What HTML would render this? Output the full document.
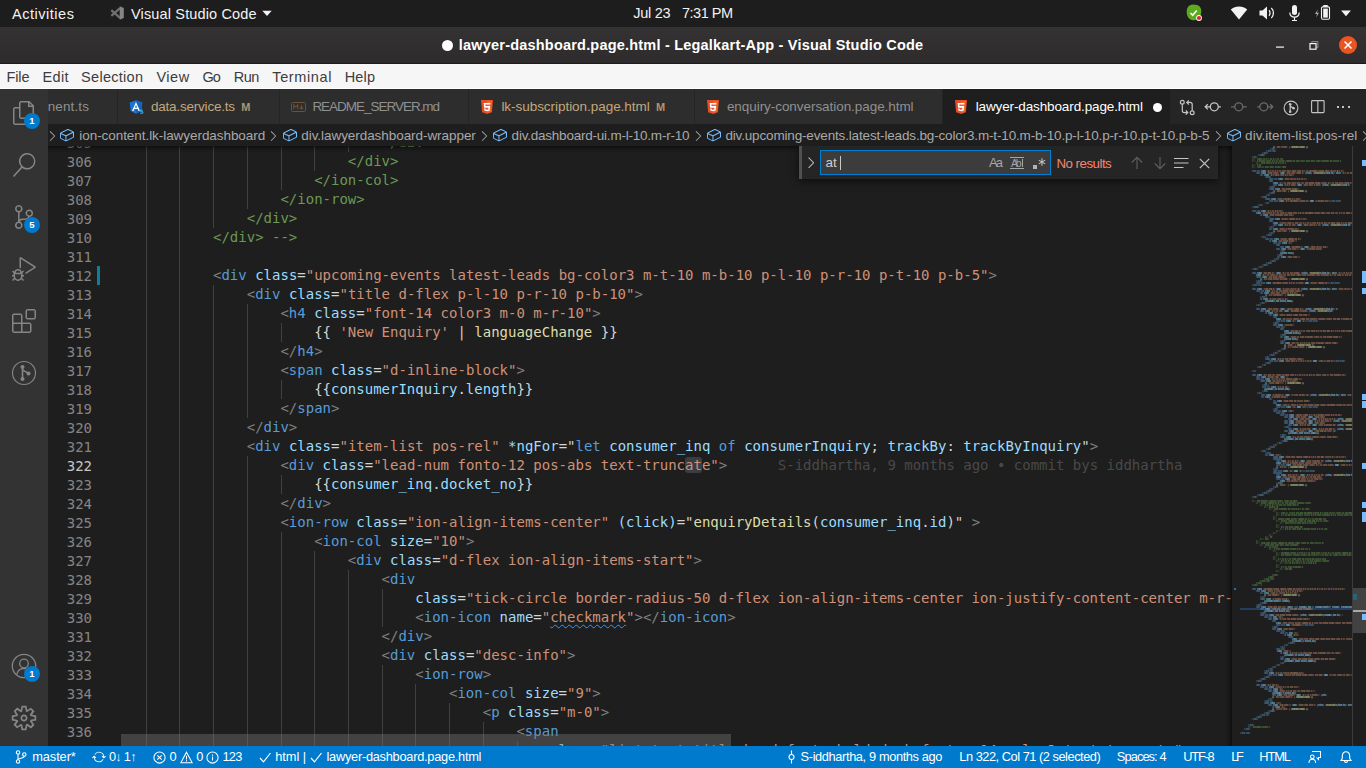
<!DOCTYPE html>
<html lang="en">
<head>
<meta charset="utf-8">
<title>lawyer-dashboard.page.html - Legalkart-App - Visual Studio Code</title>
<style>
*{box-sizing:border-box;margin:0;padding:0}
html,body{width:1366px;height:768px;overflow:hidden;background:#1e1e1e}
body{position:relative;font-family:"Liberation Sans","DejaVu Sans",sans-serif;color:#ccc;font-size:13px}
.abs{position:absolute}
.tx{position:absolute;white-space:pre}
.badge{position:absolute;width:16px;height:16px;border-radius:8px;background:#007acc;color:#fff;font-size:9.5px;font-weight:bold;line-height:16px;text-align:center}
#topbar{left:0;top:0;width:1366px;height:27px;background:#1d1d1d;color:#f2f2f2;font-size:14.5px}

#titlebar{left:0;top:27px;width:1366px;height:37px;background:linear-gradient(#343233,#2d2b2c);border-bottom:1px solid #1c1b1b;color:#fff}
#titlebar .tt{position:absolute;left:0;width:1366px;top:0;line-height:36px;text-align:center;font-weight:bold;font-size:14.5px;white-space:nowrap}
#menubar{left:0;top:64px;width:1366px;height:25px;background:#f6f6f6;border-bottom:1px solid #fff;color:#3d3d3d;font-size:14.5px}

#activity{left:0;top:89px;width:48px;height:657px;background:#333333}
#tabs{left:48px;top:89px;width:1318px;height:35px;background:#252526;overflow:hidden}
.tab{position:absolute;top:0;height:35px;background:#2d2d2d;border-right:1px solid #252526;font-size:13.5px;line-height:35px;white-space:nowrap;color:#8f8f8f}
.tab.active{background:#1e1e1e;color:#fff}
.tab.mod{color:#a8946f}

#crumbs{left:48px;top:124px;width:1318px;height:22px;background:#1e1e1e;color:#a9a9a9;font-size:13.5px;line-height:22px;overflow:hidden;white-space:nowrap}

#editor{left:48px;top:146px;width:1318px;height:600px;background:#1e1e1e;overflow:hidden}
#code{position:absolute;left:0;top:0;width:1183px;height:600px;overflow:hidden}
#gutter{position:absolute;left:0;top:0;width:64px;height:600px;background:#1e1e1e;overflow:hidden}
#topshadow{position:absolute;left:0;top:0;width:1304px;height:6px;box-shadow:#000 0 6px 6px -6px inset}
#status{left:0;top:746px;width:1366px;height:22px;background:#007acc;color:#fff;font-size:12.5px;line-height:22px;white-space:nowrap}

.mono{font-family:"DejaVu Sans Mono","Liberation Mono",monospace;font-size:14px}
.ln{position:absolute;left:0;width:44px;text-align:right;color:#858585;line-height:19px;height:19px}
.ln.cur{color:#c6c6c6}
.cl{position:absolute;white-space:pre;line-height:19px;height:19px;color:#d4d4d4}
.g{color:#808080}.t{color:#569cd6}.a{color:#9cdcfe}.s{color:#ce9178}.c{color:#6a9955}.f{color:#dcdcaa}.k{color:#569cd6}
.sel{background:#3a3d41;border-radius:3px}
.blame{color:#494949;margin-left:50.6px}
.sq{text-decoration:underline wavy #3794ff 1px;text-underline-offset:2px}
.guide{position:absolute;width:1px;background:#404040}
.gitmod{position:absolute;left:49px;top:120px;width:3px;height:19px;background:#0c7d9d}
#find{font-family:"Liberation Sans","DejaVu Sans",sans-serif;background:#252526;box-shadow:0 2px 8px rgba(0,0,0,.6)}
#mmshadow{position:absolute;left:1178px;top:0;width:6px;height:600px;box-shadow:#000 -6px 0 6px -6px inset}
#mm{position:absolute;left:1184px;top:0;width:120px;height:600px;overflow:hidden;background:#1e1e1e}
#mmtext{position:absolute;left:4.3px;top:-1px;transform-origin:0 0;transform:scale(0.083051,0.1);white-space:pre;font-size:20px;line-height:20px;text-shadow:0 9px 0;opacity:.92;font-weight:bold;color:#d4d4d4}
#mmtext .p{color:#d4d4d4}
.mmsel{position:absolute;left:8px;top:462px;width:112px;height:2px;background:#223f60}
.mmgit{position:absolute;left:2px;top:442px;width:2px;height:2px;background:#0c7d9d}
#vscroll{position:absolute;left:1304px;top:0;width:14px;height:600px;border-left:1px solid #3b3b3b}
.vs-slider{position:absolute;left:0;top:442px;width:13px;height:45px;background:rgba(121,121,121,.4)}
.vs-git{position:absolute;left:0;top:448px;width:4px;height:6px;background:rgba(12,125,157,.6)}
.vs-cursor{position:absolute;left:0;top:464px;width:13px;height:2px;background:#a9a9a9}
.vs-info{position:absolute;left:9px;width:4px;background:#75beff}
#hscroll{position:absolute;left:73px;top:588px;width:610px;height:12px;background:rgba(121,121,121,0.4)}
</style>
</head>
<body>
<div id="topbar" class="abs">
<span class="tx" style="left:12.10px;top:1px;font-size:14.5px;letter-spacing:0.514px;line-height:27px;">Activities</span>
<svg class="abs" style="left:109px;top:5px" width="16" height="16" viewBox="0 0 16 16" ><path d="M11 3.200L2.300 10.800M11 12.800L2.300 5.200" stroke="#6f6f6f" stroke-width="2.300" fill="none"/><path fill="#858585" d="M10.700 1.200L14.800 3v10l-4.100 1.800z"/></svg>
<span class="tx" style="left:131.00px;top:1px;font-size:14.5px;letter-spacing:0.15px;line-height:27px;">Visual Studio Code</span>
<svg class="abs" style="left:262px;top:10px" width="10" height="7" viewBox="0 0 10 7" ><path fill="#f2f2f2" d="M.300 .800h9.400L5 6z"/></svg>
<span class="tx" style="left:633.20px;top:0px;font-size:14.5px;letter-spacing:-0.255px;line-height:27px;">Jul 23</span>
<span class="tx" style="left:681.90px;top:0px;font-size:14.5px;letter-spacing:-0.462px;line-height:27px;">7:31 PM</span>
<svg class="abs" style="left:1185px;top:4px" width="18" height="18" viewBox="0 0 18 18" ><path fill="#5cab1d" d="M5 1.200C7 .300 9.500 .300 12 1c2.800.800 4.300 3 4.300 6 0 3.500-1.200 6.500-3.800 8.300-2.300 1.600-5.800 1.200-7.800-.300C2.500 13.300 1.600 10.500 1.700 7.500 1.800 4.500 2.800 2.200 5 1.200z"/><path d="M5.500 9l2.200 2.200 4-4.700" fill="none" stroke="#fff" stroke-width="1.600"/><circle cx="14" cy="14" r="2.900" fill="#fff"/><circle cx="14" cy="14" r="2.100" fill="#e5202e"/></svg>
<svg class="abs" style="left:1230px;top:6px" width="18" height="14" viewBox="0 0 18 14" ><path fill="#f2f2f2" d="M9 13.500L.800 3.600C3 1.600 5.900 .500 9 .500s6 1.100 8.200 3.100z"/><path fill="none" stroke="#1d1d1d" stroke-width="1.100" d="M2.500 5.500C4.300 4 6.600 3.200 9 3.200s4.700.800 6.500 2.300" opacity="0"/></svg>
<svg class="abs" style="left:1259px;top:6px" width="17" height="14" viewBox="0 0 17 14" ><path fill="#f2f2f2" d="M.500 4.500h3L8 .500v13L3.500 9.500h-3z"/><path fill="none" stroke="#f2f2f2" stroke-width="1.300" d="M10 4.300c1.400 1.300 1.400 4.100 0 5.400M12.300 2c2.800 2.600 2.800 7.400 0 10"/></svg>
<svg class="abs" style="left:1288px;top:4px" width="13" height="18" viewBox="0 0 13 18" ><rect x="4" y="1" width="5" height="10" rx="2.500" fill="#f2f2f2"/><path fill="none" stroke="#f2f2f2" stroke-width="1.200" d="M1.800 8.500c0 3 2 4.700 4.700 4.700s4.700-1.700 4.700-4.700M6.500 13.200v3M4 16.500h5"/></svg>
<svg class="abs" style="left:1314px;top:4px" width="18" height="17" viewBox="0 0 18 17" ><path fill="#a9a9a9" d="M3.800 5.500L1 10h2l-.800 3.500L5 8.800H3z"/><rect x="9.300" y="1" width="4.400" height="2" fill="#f2f2f2"/><rect x="7.500" y="2.900" width="8" height="12.400" rx="1.200" fill="none" stroke="#f2f2f2" stroke-width="1.100"/><rect x="9.200" y="4.600" width="4.600" height="9" fill="#f2f2f2"/></svg>
<svg class="abs" style="left:1341px;top:10px" width="10" height="7" viewBox="0 0 10 7" ><path fill="#f2f2f2" d="M.100 .600h9.800L5 6.200z"/></svg>
</div>
<div id="titlebar" class="abs">
<div class="abs" style="left:441.700px;top:13px;width:11px;height:11px;border-radius:50%;background:#fff"></div>
<span class="tx" style="left:458.80px;top:0px;font-size:14.5px;letter-spacing:0.203px;font-weight:700;color:#fff;line-height:36px;">lawyer-dashboard.page.html - Legalkart-App - Visual Studio Code</span>
<svg class="abs" style="left:1275px;top:17px" width="10" height="5" viewBox="0 0 10 5" ><rect x="1" y="2.500" width="8" height="1.200" fill="#f5f5f5"/></svg>
<svg class="abs" style="left:1309px;top:14px" width="10" height="9" viewBox="0 0 10 9" ><path d="M2.800 2.300V.600h6.100v6.100H7.300" fill="none" stroke="#8e8e8e" stroke-width="1"/><rect x="1" y="2.600" width="6" height="5.600" fill="none" stroke="#f5f5f5" stroke-width="1.200"/></svg>
<div class="abs" style="left:1339px;top:9px;width:18px;height:18px;border-radius:50%;background:#e95420"></div>
<svg class="abs" style="left:1343px;top:13px" width="10" height="10" viewBox="0 0 10 10" ><path d="M1.500 1.500l7 7M8.500 1.500l-7 7" stroke="#fff" stroke-width="1.600"/></svg>
</div>
<div id="menubar" class="abs">
<span class="tx" style="left:6.40px;top:1px;font-size:14.5px;letter-spacing:-0.05px;line-height:25px;">File</span>
<span class="tx" style="left:42.50px;top:1px;font-size:14.5px;letter-spacing:0.371px;line-height:25px;">Edit</span>
<span class="tx" style="left:81.10px;top:1px;font-size:14.5px;letter-spacing:0.287px;line-height:25px;">Selection</span>
<span class="tx" style="left:156.40px;top:1px;font-size:14.5px;letter-spacing:0.551px;line-height:25px;">View</span>
<span class="tx" style="left:202.60px;top:1px;font-size:14.5px;letter-spacing:-1.163px;line-height:25px;">Go</span>
<span class="tx" style="left:233.70px;top:1px;font-size:14.5px;letter-spacing:-0.444px;line-height:25px;">Run</span>
<span class="tx" style="left:272.30px;top:1px;font-size:14.5px;letter-spacing:0.627px;line-height:25px;">Terminal</span>
<span class="tx" style="left:344.70px;top:1px;font-size:14.5px;letter-spacing:0.163px;line-height:25px;">Help</span>
</div><div id="activity" class="abs">
<svg class="abs" style="left:12px;top:12px" width="24" height="24" viewBox="0 0 24 24" ><path fill="#858585" d="M17.5 0h-9L7 1.5V6H2.5L1 7.5v15.07L2.5 24h12.07L16 22.57V18h4.7l1.3-1.43V4.5L17.5 0zm0 2.12l2.38 2.38H17.5V2.12zm-3 20.38h-12v-15H7v9.07L8.5 18h6v4.5zm6-6h-12v-15H16V6h4.5v10.5z"/></svg>
<div class="badge" style="left:24px;top:24px">1</div>
<svg class="abs" style="left:12px;top:64px" width="24" height="24" viewBox="0 0 24 24" ><path fill="#858585" d="M15.25 0a8.25 8.25 0 0 0-6.18 13.72L1 22.88l1.12 1.12 8.05-9.12A8.251 8.251 0 1 0 15.25.01V0zm0 15a6.75 6.75 0 1 1 0-13.5 6.75 6.75 0 0 1 0 13.5z"/></svg>
<svg class="abs" style="left:12px;top:116px" width="24" height="24" viewBox="0 0 24 24" ><path fill="#858585" d="M21.007 8.222A3.738 3.738 0 0 0 15.045 5.2a3.737 3.737 0 0 0 1.156 6.583 2.988 2.988 0 0 1-2.668 1.67h-2.99a4.456 4.456 0 0 0-2.989 1.165V7.4a3.737 3.737 0 1 0-1.494 0v9.117a3.776 3.776 0 1 0 1.816.099 2.99 2.99 0 0 1 2.668-1.667h2.99a4.484 4.484 0 0 0 4.223-3.039 3.736 3.736 0 0 0 3.25-3.687zM4.565 3.738a2.242 2.242 0 1 1 4.484 0 2.242 2.242 0 0 1-4.484 0zm4.484 16.441a2.242 2.242 0 1 1-4.484 0 2.242 2.242 0 0 1 4.484 0zm8.221-9.715a2.242 2.242 0 1 1 0-4.485 2.242 2.242 0 0 1 0 4.485z"/></svg>
<div class="badge" style="left:24px;top:128px">5</div>
<svg class="abs" style="left:12px;top:168px" width="24" height="24" viewBox="0 0 24 24" ><path fill="#858585" d="M10.94 13.5l-1.32 1.32a3.73 3.73 0 0 0-7.24 0L1.06 13.5 0 14.56l1.72 1.72-.22.22V18H0v1.5h1.5v.08c.077.489.214.966.41 1.42L0 22.94 1.06 24l1.65-1.65A4.308 4.308 0 0 0 6 24a4.31 4.31 0 0 0 3.29-1.65L10.94 24 12 22.94 10.09 21c.198-.464.336-.951.41-1.45v-.1H12V18h-1.5v-1.500l-.22-.22L12 14.560l-1.060-1.060zM6 13.500a2.250 2.250 0 0 1 2.250 2.250h-4.500A2.250 2.250 0 0 1 6 13.500zm3 6a3.330 3.330 0 0 1-3 3 3.330 3.330 0 0 1-3-3v-2.250h6v2.250zm14.760-9.900v1.260L13.500 17.370V15.600l8.500-5.370L9 2v9.460a5.070 5.070 0 0 0-1.500-.72V.630L8.640 0l15.120 9.600z"/></svg>
<svg class="abs" style="left:12px;top:220px" width="24" height="24" viewBox="0 0 24 24" ><path fill="#858585" d="M13.5 1.5L15 0h7.5L24 1.5V9l-1.5 1.5H15L13.500 9V1.500zm1.500 0V9h7.500V1.500H15zM0 15V6l1.500-1.500H9L10.500 6v7.500H18l1.500 1.500v7.500L18 24H1.500L0 22.500V15zm9-1.500V6H1.500v7.500H9zM9 15H1.500v7.500H9V15zm1.500 7.500H18V15h-7.500v7.500z"/></svg>
<svg class="abs" style="left:11px;top:271px" width="26" height="26" viewBox="0 0 26 26" ><circle cx="13" cy="13" r="11.5" fill="none" stroke="#858585" stroke-width="1.2"/><path d="M11.5 18.5V7.500M11.5 9c0 3 5.500 2 5.500 5" fill="none" stroke="#858585" stroke-width="1.600"/><circle cx="11.500" cy="7" r="2" fill="#858585"/><circle cx="11.500" cy="19" r="2" fill="#858585"/><circle cx="17.500" cy="13.500" r="2" fill="#858585"/></svg>
<svg class="abs" style="left:11px;top:564px" width="26" height="26" viewBox="0 0 26 26" ><circle cx="13" cy="13" r="11.700" fill="none" stroke="#858585" stroke-width="1.300"/><circle cx="13" cy="10.500" r="4.300" fill="none" stroke="#858585" stroke-width="1.300"/><path d="M5.800 21.500c.8-4 3.600-6 7.200-6s6.400 2 7.200 6" fill="none" stroke="#858585" stroke-width="1.300"/></svg>
<div class="badge" style="left:24px;top:577px">1</div>
<svg class="abs" style="left:10px;top:615px" width="28" height="28" viewBox="0 0 16 16" ><path fill="#858585" d="M9.1 4.4L8.6 2H7.4l-.5 2.4-.7.3-2-1.3-.9.8 1.3 2-.2.7-2.4.5v1.200l2.400.500.300.800-1.300 2 .800.800 2-1.300.800.300.400 2.300h1.200l.500-2.400.800-.300 2 1.300.800-.800-1.300-2 .300-.800 2.300-.400V7.400l-2.400-.500-.300-.800 1.300-2-.800-.800-2 1.300-.700-.200zM9.400 1l.500 2.400L12 2.100l2 2-1.400 2.100 2.400.400v2.800l-2.400.500L14 12l-2 2-2.100-1.400-.500 2.400H6.600l-.500-2.400L4 13.900l-2-2 1.400-2.100L1 9.400V6.600l2.400-.500L2.100 4l2-2 2.100 1.400.400-2.400h2.800zm.600 7c0 1.100-.900 2-2 2s-2-.900-2-2 .900-2 2-2 2 .900 2 2zM8 9c.600 0 1-.400 1-1s-.400-1-1-1-1 .400-1 1 .400 1 1 1z"/></svg>
</div><div id="tabs" class="abs">
<div class="tab " style="left:0px;width:70px"></div>
<div class="tab " style="left:70px;width:162px"></div>
<div class="tab " style="left:232px;width:189px"></div>
<div class="tab " style="left:421px;width:226px"></div>
<div class="tab " style="left:647px;width:248px"></div>
<div class="tab active" style="left:895px;width:228px"></div>
<span class="tx" style="left:-0.30px;top:0px;font-size:13.5px;letter-spacing:0.118px;color:#909090;line-height:35px;">nent.ts</span>
<svg class="abs" style="left:81px;top:11px" width="15" height="15" viewBox="0 0 15 15" ><path fill="#1976d2" d="M7 .300L13.300 2.600l-1 8.300L7 13.800 1.700 10.900.700 2.600z"/><path fill="#1565c0" d="M7 .300L13.300 2.600l-1 8.300L7 13.800z"/><path fill="#fff" d="M7 2L3 11h1.500l.800-2h3.400l.800 2H11zM7 4.800L8.100 7.700H5.900z"/><path fill="none" stroke="#29b6f6" stroke-width="1.100" d="M13.800 10.300c-.500-.500-2.300-.600-2.300.400 0 1.100 2.400.600 2.400 1.800 0 1-1.900 1-2.600.300"/></svg>
<span class="tx" style="left:102.90px;top:0px;font-size:13.5px;letter-spacing:-0.203px;color:#c3a77c;line-height:35px;">data.service.ts</span>
<span class="tx" style="left:193.20px;top:0.5px;font-size:11px;letter-spacing:0.428px;font-weight:700;color:#c3a77c;line-height:35px;opacity:.85;">M</span>
<svg class="abs" style="left:243px;top:13px" width="15" height="10" viewBox="0 0 15 10" ><rect x=".500" y=".500" width="14" height="9" rx="1" fill="none" stroke="#6b5236" stroke-width="1"/><path d="M2.800 7.300V2.800L4.800 5l2-2.200v4.500M10.500 2.800v4.200M8.800 5.500l1.700 1.800 1.700-1.800" fill="none" stroke="#6b5236" stroke-width="1.100"/></svg>
<span class="tx" style="left:264.40px;top:0px;font-size:13.5px;letter-spacing:-1.022px;color:#909090;line-height:35px;">README_SERVER.md</span>
<svg class="abs" style="left:433px;top:11px" width="12" height="14" viewBox="0 0 12 14" ><path fill="#e44d26" d="M0 0h12l-1.100 12.300L6 14l-4.900-1.700z"/><path fill="#f16529" d="M6 1v12l4-1.300L10.900 1z"/><path fill="#fff" d="M2.700 3h6.700l-.150 1.600H4.400l.120 1.500h4.600l-.400 4.300L6 11.200l-2.700-.800-.180-2h1.500l.080 1L6 9.700l1.300-.300.150-1.700H3.100z"/></svg>
<span class="tx" style="left:453.40px;top:0px;font-size:13.5px;letter-spacing:-0.042px;color:#c3a77c;line-height:35px;">lk-subscription.page.html</span>
<span class="tx" style="left:608.00px;top:0.5px;font-size:11px;letter-spacing:-0.172px;font-weight:700;color:#c3a77c;line-height:35px;opacity:.85;">M</span>
<svg class="abs" style="left:659px;top:11px" width="12" height="14" viewBox="0 0 12 14" ><path fill="#e44d26" d="M0 0h12l-1.100 12.300L6 14l-4.900-1.700z"/><path fill="#f16529" d="M6 1v12l4-1.300L10.900 1z"/><path fill="#fff" d="M2.700 3h6.700l-.150 1.600H4.400l.120 1.500h4.600l-.400 4.300L6 11.200l-2.700-.800-.180-2h1.500l.080 1L6 9.700l1.300-.300.150-1.700H3.100z"/></svg>
<span class="tx" style="left:678.90px;top:0px;font-size:13.5px;letter-spacing:-0.056px;color:#909090;line-height:35px;">enquiry-conversation.page.html</span>
<svg class="abs" style="left:907px;top:11px" width="12" height="14" viewBox="0 0 12 14" ><path fill="#e44d26" d="M0 0h12l-1.100 12.300L6 14l-4.900-1.700z"/><path fill="#f16529" d="M6 1v12l4-1.300L10.900 1z"/><path fill="#fff" d="M2.700 3h6.700l-.150 1.600H4.400l.120 1.500h4.600l-.400 4.300L6 11.200l-2.700-.800-.180-2h1.500l.080 1L6 9.700l1.300-.300.150-1.700H3.100z"/></svg>
<span class="tx" style="left:927.70px;top:0px;font-size:13.5px;letter-spacing:-0.124px;color:#fff;line-height:35px;">lawyer-dashboard.page.html</span>
<div class="abs" style="left:1104.6px;top:13.5px;width:9px;height:9px;border-radius:50%;background:#fff"></div>
<svg class="abs" style="left:1131px;top:10px" width="17" height="17" viewBox="0 0 17 17" ><g fill="none" stroke="#c5c5c5" stroke-width="1.200"><circle cx="3.300" cy="3.300" r="1.900"/><circle cx="13.200" cy="13.700" r="1.900"/><path d="M3.300 5.200v6.300c0 1.300.800 2.100 2.100 2.100h3.200M6.800 11.500l2 2.100-2 2.100M13.200 11.800V5.500c0-1.300-.800-2.100-2.100-2.100H8M9.800 1.300l-2 2.100 2 2.100"/></g></svg>
<svg class="abs" style="left:1156px;top:11px" width="18" height="14" viewBox="0 0 18 14" ><g fill="none" stroke="#c5c5c5" stroke-width="1.300"><circle cx="10.300" cy="6.800" r="4"/><path d="M6.300 6.800H1.200M3.800 4.200L1.200 6.800l2.600 2.600M14.300 6.800h2.600"/></g></svg>
<svg class="abs" style="left:1182px;top:11px" width="18" height="14" viewBox="0 0 18 14" ><g fill="none" stroke="#6a6a6a" stroke-width="1.300"><circle cx="8.800" cy="6.800" r="4"/><path d="M4.800 6.800H1M12.800 6.800h4"/></g></svg>
<svg class="abs" style="left:1208px;top:11px" width="18" height="14" viewBox="0 0 18 14" ><g fill="none" stroke="#6a6a6a" stroke-width="1.300"><circle cx="7.800" cy="6.800" r="4"/><path d="M3.800 6.800H1.100M11.800 6.800h5M14.200 4.200l2.600 2.600-2.600 2.600"/></g></svg>
<svg class="abs" style="left:1235px;top:10.5px" width="16" height="16" viewBox="0 0 16 16" ><circle cx="8" cy="8" r="6.900" fill="none" stroke="#c5c5c5" stroke-width="1.100"/><path d="M7.200 11.500V4.500M7.200 5.500c0 2 3.300 1.300 3.300 3.300" fill="none" stroke="#c5c5c5" stroke-width="1.200"/><circle cx="7.200" cy="4.300" r="1.300" fill="#c5c5c5"/><circle cx="7.200" cy="11.700" r="1.300" fill="#c5c5c5"/><circle cx="10.600" cy="8.300" r="1.300" fill="#c5c5c5"/></svg>
<svg class="abs" style="left:1263px;top:11px" width="14" height="14" viewBox="0 0 14 14" ><g fill="none" stroke="#c5c5c5" stroke-width="1.100"><rect x=".600" y=".600" width="12.500" height="12" rx=".800"/><path d="M6.850 .600v12"/></g></svg>
<div class="abs" style="left:1289px;top:16.700000000000003px;width:2px;height:2px;background:#c5c5c5"></div>
<div class="abs" style="left:1294.3px;top:16.700000000000003px;width:2px;height:2px;background:#c5c5c5"></div>
<div class="abs" style="left:1299.5px;top:16.700000000000003px;width:2px;height:2px;background:#c5c5c5"></div>
</div><div id="crumbs" class="abs">
<svg class="abs" style="left:-4.200000000000003px;top:3.700000000000003px" width="16" height="16" viewBox="0 0 16 16" ><path fill="#a9a9a9" d="M10.072 8.024L5.715 3.667l.618-.62L11 7.716v.618L6.333 13l-.618-.619 4.357-4.357z"/></svg>
<svg class="abs" style="left:10.899999999999999px;top:3.299999999999997px" width="16" height="16" viewBox="0 0 16 16" ><path fill="#75beff" d="M14.45 4.5l-5-2.5h-.9l-7 3.5-.55.89v4.5l.55.9 5 2.500h.9l7-3.500.55-.9v-4.500l-.55-.89zm-8 8.640l-4.500-2.250V7.170l4.500 2v3.970zm.5-4.800L2.290 6.230l6.660-3.340 4.450 2.230-6.450 3.220zm7 1.550l-6.500 3.250V9.210l6.500-3.250v3.930z"/></svg>
<span class="tx" style="left:31.30px;top:0.5px;font-size:13.5px;letter-spacing:-0.058px;color:#a9a9a9;line-height:22px;">ion-content.lk-lawyerdashboard</span>
<svg class="abs" style="left:217.3px;top:3.700000000000003px" width="16" height="16" viewBox="0 0 16 16" ><path fill="#a9a9a9" d="M10.072 8.024L5.715 3.667l.618-.62L11 7.716v.618L6.333 13l-.618-.619 4.357-4.357z"/></svg>
<svg class="abs" style="left:233.7px;top:3.299999999999997px" width="16" height="16" viewBox="0 0 16 16" ><path fill="#75beff" d="M14.45 4.5l-5-2.5h-.9l-7 3.5-.55.89v4.5l.55.9 5 2.500h.9l7-3.500.55-.9v-4.500l-.55-.89zm-8 8.640l-4.500-2.250V7.170l4.500 2v3.970zm.5-4.800L2.290 6.230l6.660-3.340 4.450 2.230-6.450 3.220zm7 1.550l-6.500 3.250V9.210l6.500-3.250v3.930z"/></svg>
<span class="tx" style="left:253.30px;top:0.5px;font-size:13.5px;letter-spacing:-0.06px;color:#a9a9a9;line-height:22px;">div.lawyerdashboard-wrapper</span>
<svg class="abs" style="left:427.90000000000003px;top:3.700000000000003px" width="16" height="16" viewBox="0 0 16 16" ><path fill="#a9a9a9" d="M10.072 8.024L5.715 3.667l.618-.62L11 7.716v.618L6.333 13l-.618-.619 4.357-4.357z"/></svg>
<svg class="abs" style="left:443.9px;top:3.299999999999997px" width="16" height="16" viewBox="0 0 16 16" ><path fill="#75beff" d="M14.45 4.5l-5-2.5h-.9l-7 3.5-.55.89v4.5l.55.9 5 2.500h.9l7-3.500.55-.9v-4.500l-.55-.89zm-8 8.640l-4.500-2.250V7.170l4.500 2v3.970zm.5-4.800L2.290 6.230l6.660-3.340 4.450 2.230-6.450 3.220zm7 1.550l-6.500 3.250V9.210l6.500-3.250v3.930z"/></svg>
<span class="tx" style="left:463.60px;top:0.5px;font-size:13.5px;letter-spacing:-0.221px;color:#a9a9a9;line-height:22px;">div.dashboard-ui.m-l-10.m-r-10</span>
<svg class="abs" style="left:642.0999999999999px;top:3.700000000000003px" width="16" height="16" viewBox="0 0 16 16" ><path fill="#a9a9a9" d="M10.072 8.024L5.715 3.667l.618-.62L11 7.716v.618L6.333 13l-.618-.619 4.357-4.357z"/></svg>
<svg class="abs" style="left:658.4px;top:3.299999999999997px" width="16" height="16" viewBox="0 0 16 16" ><path fill="#75beff" d="M14.45 4.5l-5-2.5h-.9l-7 3.5-.55.89v4.5l.55.9 5 2.500h.9l7-3.500.55-.9v-4.500l-.55-.89zm-8 8.640l-4.500-2.250V7.170l4.500 2v3.970zm.5-4.800L2.290 6.230l6.660-3.340 4.450 2.230-6.450 3.220zm7 1.550l-6.500 3.250V9.210l6.500-3.250v3.930z"/></svg>
<span class="tx" style="left:677.40px;top:0.5px;font-size:13.5px;letter-spacing:-0.159px;color:#a9a9a9;line-height:22px;">div.upcoming-events.latest-leads.bg-color3.m-t-10.m-b-10.p-l-10.p-r-10.p-t-10.p-b-5</span>
<svg class="abs" style="left:1162.1px;top:3.700000000000003px" width="16" height="16" viewBox="0 0 16 16" ><path fill="#a9a9a9" d="M10.072 8.024L5.715 3.667l.618-.62L11 7.716v.618L6.333 13l-.618-.619 4.357-4.357z"/></svg>
<svg class="abs" style="left:1178.2px;top:3.299999999999997px" width="16" height="16" viewBox="0 0 16 16" ><path fill="#75beff" d="M14.45 4.5l-5-2.5h-.9l-7 3.5-.55.89v4.5l.55.9 5 2.500h.9l7-3.500.55-.9v-4.500l-.55-.89zm-8 8.640l-4.500-2.250V7.170l4.500 2v3.970zm.5-4.800L2.290 6.230l6.660-3.340 4.450 2.230-6.450 3.220zm7 1.550l-6.500 3.250V9.210l6.500-3.250v3.930z"/></svg>
<span class="tx" style="left:1197.10px;top:0.5px;font-size:13.5px;letter-spacing:0.028px;color:#a9a9a9;line-height:22px;">div.item-list.pos-rel</span>
<svg class="abs" style="left:1309.1px;top:3.700000000000003px" width="16" height="16" viewBox="0 0 16 16" ><path fill="#a9a9a9" d="M10.072 8.024L5.715 3.667l.618-.62L11 7.716v.618L6.333 13l-.618-.619 4.357-4.357z"/></svg>
</div>
<div id="editor" class="abs mono">
<div id="code">
<div class="guide" style="left:98px;top:-13px;height:627px"></div>
<div class="guide" style="left:131px;top:-13px;height:627px"></div>
<div class="guide" style="left:165px;top:-13px;height:95px"></div>
<div class="guide" style="left:165px;top:139px;height:475px"></div>
<div class="guide" style="left:199px;top:-13px;height:76px"></div>
<div class="guide" style="left:199px;top:158px;height:114px"></div>
<div class="guide" style="left:199px;top:310px;height:304px"></div>
<div class="guide" style="left:233px;top:-13px;height:57px"></div>
<div class="guide" style="left:233px;top:177px;height:19px"></div>
<div class="guide" style="left:233px;top:234px;height:19px"></div>
<div class="guide" style="left:233px;top:329px;height:19px"></div>
<div class="guide" style="left:233px;top:386px;height:228px"></div>
<div class="guide" style="left:266px;top:-13px;height:38px"></div>
<div class="guide" style="left:266px;top:405px;height:209px"></div>
<div class="guide" style="left:300px;top:-13px;height:19px"></div>
<div class="guide" style="left:300px;top:424px;height:190px"></div>
<div class="guide" style="left:334px;top:443px;height:38px"></div>
<div class="guide" style="left:334px;top:519px;height:95px"></div>
<div class="guide" style="left:367px;top:538px;height:76px"></div>
<div class="guide" style="left:401px;top:557px;height:57px"></div>
<div class="guide" style="left:435px;top:576px;height:38px"></div>
<div class="guide" style="left:469px;top:595px;height:19px"></div>
<div class="cl" style="top:-13px;left:333.57px"><span class="c">&lt;/div&gt;</span></div>
<div class="cl" style="top:6px;left:299.86px"><span class="c">&lt;/div&gt;</span></div>
<div class="cl" style="top:25px;left:266.14px"><span class="c">&lt;/ion-col&gt;</span></div>
<div class="cl" style="top:44px;left:232.43px"><span class="c">&lt;/ion-row&gt;</span></div>
<div class="cl" style="top:63px;left:198.71px"><span class="c">&lt;/div&gt;</span></div>
<div class="cl" style="top:82px;left:165.00px"><span class="c">&lt;/div&gt; --&gt;</span></div>
<div class="cl" style="top:120px;left:165.00px"><span class="g">&lt;</span><span class="t">div</span> <span class="a">class</span>=<span class="s">"upcoming-events latest-leads bg-color3 m-t-10 m-b-10 p-l-10 p-r-10 p-t-10 p-b-5"</span><span class="g">&gt;</span></div>
<div class="cl" style="top:139px;left:198.71px"><span class="g">&lt;</span><span class="t">div</span> <span class="a">class</span>=<span class="s">"title d-flex p-l-10 p-r-10 p-b-10"</span><span class="g">&gt;</span></div>
<div class="cl" style="top:158px;left:232.43px"><span class="g">&lt;</span><span class="t">h4</span> <span class="a">class</span>=<span class="s">"font-14 color3 m-0 m-r-10"</span><span class="g">&gt;</span></div>
<div class="cl" style="top:177px;left:266.14px">{{ <span class="s">'New Enquiry'</span> | <span class="f">languageChange</span> }}</div>
<div class="cl" style="top:196px;left:232.43px"><span class="g">&lt;/</span><span class="t">h4</span><span class="g">&gt;</span></div>
<div class="cl" style="top:215px;left:232.43px"><span class="g">&lt;</span><span class="t">span</span> <span class="a">class</span>=<span class="s">"d-inline-block"</span><span class="g">&gt;</span></div>
<div class="cl" style="top:234px;left:266.14px">{{<span class="a">consumerInquiry</span>.<span class="a">length</span>}}</div>
<div class="cl" style="top:253px;left:232.43px"><span class="g">&lt;/</span><span class="t">span</span><span class="g">&gt;</span></div>
<div class="cl" style="top:272px;left:198.71px"><span class="g">&lt;/</span><span class="t">div</span><span class="g">&gt;</span></div>
<div class="cl" style="top:291px;left:198.71px"><span class="g">&lt;</span><span class="t">div</span> <span class="a">class</span>=<span class="s">"item-list pos-rel"</span> <span class="a">*ngFor</span>="<span class="k">let</span> <span class="a">consumer_inq</span> <span class="k">of</span> <span class="a">consumerInquiry</span>; <span class="a">trackBy</span>: <span class="a">trackByInquiry</span>"<span class="g">&gt;</span></div>
<div class="cl" style="top:310px;left:232.43px"><span class="g">&lt;</span><span class="t">div</span> <span class="a">class</span>=<span class="s">"lead-num fonto-12 pos-abs text-trunc<span class="sel">at</span>e"</span><span class="g">&gt;</span><span class="blame">S-iddhartha, 9 months ago • commit bys iddhartha</span></div>
<div class="cl" style="top:329px;left:266.14px">{{<span class="a">consumer_inq</span>.<span class="a">docket_no</span>}}</div>
<div class="cl" style="top:348px;left:232.43px"><span class="g">&lt;/</span><span class="t">div</span><span class="g">&gt;</span></div>
<div class="cl" style="top:367px;left:232.43px"><span class="g">&lt;</span><span class="t">ion-row</span> <span class="a">class</span>=<span class="s">"ion-align-items-center"</span> <span class="a">(click)</span>="<span class="f">enquiryDetails</span>(<span class="a">consumer_inq</span>.<span class="a">id</span>)" <span class="g">&gt;</span></div>
<div class="cl" style="top:386px;left:266.14px"><span class="g">&lt;</span><span class="t">ion-col</span> <span class="a">size</span>=<span class="s">"10"</span><span class="g">&gt;</span></div>
<div class="cl" style="top:405px;left:299.86px"><span class="g">&lt;</span><span class="t">div</span> <span class="a">class</span>=<span class="s">"d-flex ion-align-items-start"</span><span class="g">&gt;</span></div>
<div class="cl" style="top:424px;left:333.57px"><span class="g">&lt;</span><span class="t">div</span></div>
<div class="cl" style="top:443px;left:367.29px"><span class="a">class</span>=<span class="s">"tick-circle border-radius-50 d-flex ion-align-items-center ion-justify-content-center m-r-10"</span><span class="g">&gt;</span></div>
<div class="cl" style="top:462px;left:367.29px"><span class="g">&lt;</span><span class="t">ion-icon</span> <span class="a">name</span>=<span class="s">"<span class="sq">checkmark</span>"</span><span class="g">&gt;</span><span class="g">&lt;/</span><span class="t">ion-icon</span><span class="g">&gt;</span></div>
<div class="cl" style="top:481px;left:333.57px"><span class="g">&lt;/</span><span class="t">div</span><span class="g">&gt;</span></div>
<div class="cl" style="top:500px;left:333.57px"><span class="g">&lt;</span><span class="t">div</span> <span class="a">class</span>=<span class="s">"desc-info"</span><span class="g">&gt;</span></div>
<div class="cl" style="top:519px;left:367.29px"><span class="g">&lt;</span><span class="t">ion-row</span><span class="g">&gt;</span></div>
<div class="cl" style="top:538px;left:401.00px"><span class="g">&lt;</span><span class="t">ion-col</span> <span class="a">size</span>=<span class="s">"9"</span><span class="g">&gt;</span></div>
<div class="cl" style="top:557px;left:434.72px"><span class="g">&lt;</span><span class="t">p</span> <span class="a">class</span>=<span class="s">"m-0"</span><span class="g">&gt;</span></div>
<div class="cl" style="top:576px;left:468.43px"><span class="g">&lt;</span><span class="t">span</span></div>
<div class="cl" style="top:595px;left:502.15px"><span class="a">class</span>=<span class="s">"list-text title-head fonto-bold dark-font p-14 color3 text-truncate"</span><span class="g">&gt;</span></div>
</div>
<div id="gutter">
<div class="ln" style="top:-12px">305</div>
<div class="ln" style="top:7px">306</div>
<div class="ln" style="top:26px">307</div>
<div class="ln" style="top:45px">308</div>
<div class="ln" style="top:64px">309</div>
<div class="ln" style="top:83px">310</div>
<div class="ln" style="top:102px">311</div>
<div class="ln" style="top:121px">312</div>
<div class="ln" style="top:140px">313</div>
<div class="ln" style="top:159px">314</div>
<div class="ln" style="top:178px">315</div>
<div class="ln" style="top:197px">316</div>
<div class="ln" style="top:216px">317</div>
<div class="ln" style="top:235px">318</div>
<div class="ln" style="top:254px">319</div>
<div class="ln" style="top:273px">320</div>
<div class="ln" style="top:292px">321</div>
<div class="ln cur" style="top:311px">322</div>
<div class="ln" style="top:330px">323</div>
<div class="ln" style="top:349px">324</div>
<div class="ln" style="top:368px">325</div>
<div class="ln" style="top:387px">326</div>
<div class="ln" style="top:406px">327</div>
<div class="ln" style="top:425px">328</div>
<div class="ln" style="top:444px">329</div>
<div class="ln" style="top:463px">330</div>
<div class="ln" style="top:482px">331</div>
<div class="ln" style="top:501px">332</div>
<div class="ln" style="top:520px">333</div>
<div class="ln" style="top:539px">334</div>
<div class="ln" style="top:558px">335</div>
<div class="ln" style="top:577px">336</div>
<div class="ln" style="top:596px">337</div>
<div class="gitmod"></div>
</div>
<div id="topshadow"></div>
<div id="mmshadow"></div>
<div id="mm">
<div class="mmsel"></div>
<div class="mmgit"></div>
<div id="mmtext">                                     <span class="p">{{ </span><span class="s">'pos-relxte'</span><span class="p"> | </span><span class="f">languageChange</span><span class="p"> }}</span>
                                  <span class="g">&lt;/</span><span class="t">io</span><span class="g">&gt;</span>
                              <span class="g">&lt;/</span><span class="t">ion-row</span><span class="g">&gt;</span>
                          <span class="g">&lt;/</span><span class="t">div</span><span class="g">&gt;</span>
                      <span class="g">&lt;/</span><span class="t">span</span><span class="g">&gt;</span>
                <span class="g">&lt;/</span><span class="t">io</span><span class="g">&gt;</span>
                <span class="c">&lt;!-- fonto-12-p-r-10 p-r-10 fon</span>
                <span class="c">&lt;!-- d-inline-block m-t-10 border-radius-50 desc-info desc-info text-truncate bg-color3 u</span>
                    <span class="c">&lt;!-- item-list-m-b-10 m-t-10 i</span>
                <span class="c">&lt;!-- d-in</span>
                <span class="c">&lt;!-- font-14 desc-info border-radi</span>

                <span class="g">&lt;</span><span class="t">ion-col</span><span class="p"> </span><span class="a">class</span><span class="p">=</span><span class="s">"m-t-10 p-t-10 desc-info dark-font m-r-10 upcoming-events-tick-circle-m-0 i"</span><span class="g">&gt;</span>
                    <span class="g">&lt;</span><span class="t">div</span><span class="p"> </span><span class="a">class</span><span class="p">=</span><span class="s">"item-list0"</span><span class="p"> </span><span class="a">*ngIf</span><span class="p">=</span><span class="s">"ion-text-right p"</span><span class="p"> </span><span class="a">(click)</span><span class="p">="</span><span class="f">openDetails</span><span class="p">(</span><span class="a">item.id</span><span class="p">)" </span><span class="a">style</span><span class="p">=</span><span class="s">"p-r-10 item-list m-r-</span><span class="g">&gt;</span>
                        <span class="g">&lt;</span><span class="t">h4</span><span class="p"> </span><span class="a">class</span><span class="p">=</span><span class="s">"m-0-dark-font m-t-100"</span><span class="g">&gt;</span>
                             <span class="g">&lt;</span><span class="t">span</span><span class="g">&gt;</span>
                                 <span class="g">&lt;</span><span class="t">ion-row</span><span class="p"> </span><span class="a">class</span><span class="p">=</span><span class="s">"tick-circle-m-b-10-f"</span><span class="g">&gt;</span>
                                 <span class="g">&lt;</span><span class="t">div</span>
                                     <span class="a">class</span><span class="p">=</span><span class="s">"p-r-10 desc-info-pos-rel ion-align-items-center m-r-10 ion-text-right-p-r-10 title-p-t-10 p-r-1"</span><span class="g">&gt;</span>
                                     <span class="g">&lt;</span><span class="t">div</span><span class="p"> </span><span class="a">class</span><span class="p">=</span><span class="s">"p-b-5 item"</span><span class="p"> </span><span class="a">*ngIf</span><span class="p">=</span><span class="s">"desc-info d-inli"</span><span class="p"> </span><span class="a">(click)</span><span class="p">="</span><span class="f">openDetails</span><span class="p">(</span><span class="a">item.i</span><span class="g">&gt;</span>
                                 <span class="g">&lt;/</span><span class="t">div</span><span class="g">&gt;</span>
                                 <span class="g">&lt;</span><span class="t">span</span><span class="p"> </span><span class="a">class</span><span class="p">=</span><span class="s">"ion-align-items"</span><span class="g">&gt;</span>
                                     <span class="p">{{ </span><span class="s">'dark-font'</span><span class="p"> | </span><span class="f">languageChange</span><span class="p"> }}</span>
                                 <span class="g">&lt;/</span><span class="t">div</span><span class="g">&gt;</span>
                              <span class="g">&lt;/</span><span class="t">p</span><span class="g">&gt;</span>
                         <span class="g">&lt;/</span><span class="t">spa</span><span class="g">&gt;</span>
                             <span class="g">&lt;</span><span class="t">span</span><span class="p"> </span><span class="a">class</span><span class="p">=</span><span class="s">"text-truncate-p-r-100"</span><span class="g">&gt;</span>
                                 <span class="g">&lt;</span><span class="t">ion-icon</span><span class="p"> </span><span class="a">class</span><span class="p">=</span><span class="s">"m-0-upcoming-events-po"</span><span class="p"> </span><span class="a">name</span><span class="p">=</span><span class="s">"d-inline-blo"</span><span class="g">&gt;&lt;/</span><span class="t">ion-icon</span><span class="g">&gt;</span>
                             <span class="g">&lt;/</span><span class="t">p</span><span class="g">&gt;</span>
                      <span class="g">&lt;/</span><span class="t">h4</span><span class="g">&gt;</span>
                <span class="g">&lt;/</span><span class="t">span</span><span class="g">&gt;</span>

                <span class="g">&lt;</span><span class="t">ion-row</span><span class="p"> </span><span class="a">class</span><span class="p">=</span><span class="s">"p-r-10 m-b-10"</span><span class="g">&gt;</span>
                    <span class="a">class</span><span class="p">=</span><span class="s">"bg-color3 m-r-10 font-14-item-list m-b-10-upcoming-events-dark-font pos-rel p-t-10 dark-font list-text p-l-10-p"</span><span class="g">&gt;</span>
                        <span class="g">&lt;</span><span class="t">p</span><span class="p"> </span><span class="a">class</span><span class="p">=</span><span class="s">"text-truncate-text-tru"</span><span class="g">&gt;</span>
                             <span class="g">&lt;</span><span class="t">div</span><span class="g">&gt;</span>
                                 <span class="g">&lt;</span><span class="t">span</span><span class="p"> </span><span class="a">class</span><span class="p">=</span><span class="s">"border-radius-50-p-l-10"</span><span class="g">&gt;</span>
                                 <span class="g">&lt;</span><span class="t">div</span>
                                     <span class="a">class</span><span class="p">=</span><span class="s">"color3-font-14 pos-rel p-l-10 d-flex m-b-10 m-t-10-dark-font p-r-10 dark-fon"</span><span class="g">&gt;</span>
                                     <span class="g">&lt;</span><span class="t">div</span><span class="p"> </span><span class="a">class</span><span class="p">=</span><span class="s">"m-b-10 tit"</span><span class="p"> </span><span class="a">*ngIf</span><span class="p">=</span><span class="s">"dark-font-m-r-10"</span><span class="p"> </span><span class="a">(click)</span><span class="p">="</span><span class="f">openDetails</span><span class="p">(</span><span class="a">item.id</span><span class="g">&gt;</span>
                                 <span class="g">&lt;/</span><span class="t">h4</span><span class="g">&gt;</span>
                                 <span class="g">&lt;</span><span class="t">h4</span><span class="p"> </span><span class="a">class</span><span class="p">=</span><span class="s">"title-d-inline-bl"</span><span class="g">&gt;</span>
                                     <span class="p">{{ </span><span class="s">'font-14xd-'</span><span class="p"> | </span><span class="f">languageChange</span><span class="p"> }}</span>
                                 <span class="g">&lt;/</span><span class="t">h4</span><span class="g">&gt;</span>
                              <span class="g">&lt;/</span><span class="t">ion</span><span class="g">&gt;</span>
                         <span class="g">&lt;/</span><span class="t">io</span><span class="g">&gt;</span>
                             <span class="g">&lt;</span><span class="t">ion-col</span><span class="p"> </span><span class="a">class</span><span class="p">=</span><span class="s">"border-radius-50 p"</span><span class="g">&gt;</span>
                                 <span class="g">&lt;</span><span class="t">p</span><span class="p"> </span><span class="a">class</span><span class="p">=</span><span class="s">"ion-align-items-"</span><span class="g">&gt;</span>
                                     <span class="g">&lt;</span><span class="t">ion-col</span><span class="p"> </span><span class="a">class</span><span class="p">=</span><span class="s">"t"</span><span class="g">&gt;</span>
                                        <span class="g">&lt;</span><span class="t">div</span>
                                            <span class="g">&lt;</span><span class="t">div</span><span class="p"> </span><span class="a">class</span><span class="p">=</span><span class="s">"upcoming-e"</span><span class="p"> </span><span class="a">*ngIf</span><span class="p">=</span><span class="s">"tick-circle pos-</span><span class="g">&gt;</span>
                                        <span class="g">&lt;</span><span class="t">div</span><span class="p"> </span><span class="a">class</span><span class="p">=</span><span class="s">"ion-text-r"</span><span class="p"> </span><span class="a">*ngIf</span><span class="p">=</span><span class="s">"d-inline-block</span><span class="g">&gt;</span>
                                            <span class="g">&lt;/</span><span class="t">di</span><span class="g">&gt;</span>
                                            <span class="p">{{</span><span class="a">consu</span><span class="p">.</span><span class="a">dock</span><span class="p">}}</span>
                                         <span class="g">&lt;/</span><span class="t">spa</span><span class="g">&gt;</span>
                                         <span class="g">&lt;</span><span class="t">h4</span><span class="p"> </span><span class="a">class</span><span class="p">=</span><span class="s">"dark-font-"</span><span class="g">&gt;</span>
                                      <span class="g">&lt;/</span><span class="t">h4</span><span class="g">&gt;</span>
                                  <span class="g">&lt;/</span><span class="t">ion</span><span class="g">&gt;</span>
                              <span class="g">&lt;/</span><span class="t">ion</span><span class="g">&gt;</span>
                          <span class="g">&lt;/</span><span class="t">div</span><span class="g">&gt;</span>
                      <span class="g">&lt;/</span><span class="t">h4</span><span class="g">&gt;</span>
                <span class="g">&lt;/</span><span class="t">div</span><span class="g">&gt;</span>

                <span class="g">&lt;</span><span class="t">div</span><span class="p"> </span><span class="a">class</span><span class="p">=</span><span class="s">"pos-abs d-"</span><span class="p"> </span><span class="a">*ngIf</span><span class="p">=</span><span class="s">"m-r-10 ion-align"</span><span class="p"> </span><span class="a">(click)</span><span class="p">="</span><span class="f">openDetails</span><span class="p">(</span><span class="a">item.id</span><span class="p">)" </span><span class="a">style</span><span class="p">=</span><span class="s">"p-r-10 m-t-10-ion-text" </span><span class="a">*ngIf</span><span class="p">=</span><span class="s">"m-</span><span class="g">&gt;</span>
                    <span class="a">class</span><span class="p">=</span><span class="s">"m-r-10 fonto-12 pos-rel ion-text-right text-truncate-text-truncate p-r-10 font-14 m-b-10 m-b-100"</span><span class="g">&gt;</span>
                    <span class="g">&lt;</span><span class="t">span</span><span class="p"> </span><span class="a">class</span><span class="p">=</span><span class="s">"ion-text-right0"</span><span class="g">&gt;</span>
                        <span class="p">{{ </span><span class="s">'m-b-10xd-inline-blockxm'</span><span class="p"> | </span><span class="f">languageChange</span><span class="p"> }}</span>
                    <span class="g">&lt;/</span><span class="t">ion</span><span class="g">&gt;</span>
                    <span class="g">&lt;</span><span class="t">ion-icon</span><span class="p"> </span><span class="a">class</span><span class="p">=</span><span class="s">"upcoming-events m-b-10 d-flex0"</span><span class="p"> </span><span class="a">name</span><span class="p">=</span><span class="s">"border-radius-50"</span><span class="g">&gt;&lt;/</span><span class="t">ion-icon</span><span class="g">&gt;</span>
                <span class="g">&lt;/</span><span class="t">ion-col</span><span class="g">&gt;</span>

                <span class="g">&lt;</span><span class="t">div</span><span class="p"> </span><span class="a">class</span><span class="p">=</span><span class="s">"lead-num d"</span><span class="p"> </span><span class="a">*ngIf</span><span class="p">=</span><span class="s">"d-flex-color3-la"</span><span class="p"> </span><span class="a">(click)</span><span class="p">="</span><span class="f">openDetails</span><span class="p">(</span><span class="a">item.id</span><span class="p">)" </span><span class="a">style</span><span class="p">=</span><span class="s">"tick-circle pos-rel-up" </span><span class="a">*ng</span><span class="g">&gt;</span>
                    <span class="g">&lt;</span><span class="t">ion-row</span><span class="p"> </span><span class="a">class</span><span class="p">=</span><span class="s">"p-l-10 ion-align-items-cente"</span><span class="g">&gt;</span>
                        <span class="g">&lt;</span><span class="t">h4</span><span class="p"> </span><span class="a">class</span><span class="p">=</span><span class="s">"desc-info fonto-12 m-b-10"</span><span class="g">&gt;</span>
                             <span class="p">{{ </span><span class="s">'m-b-10xlatest-'</span><span class="p"> | </span><span class="f">languageChange</span><span class="p"> }}</span>
                        <span class="g">&lt;/</span><span class="t">ion-</span><span class="g">&gt;</span>
                        <span class="g">&lt;</span><span class="t">p</span><span class="p"> </span><span class="a">class</span><span class="p">=</span><span class="s">"d-flex font-14 m"</span><span class="g">&gt;</span>
                             <span class="p">{{</span><span class="a">consumer_inq</span><span class="p">.</span><span class="a">docket_numb</span><span class="p">}}</span>
                        <span class="g">&lt;/</span><span class="t">io</span><span class="g">&gt;</span>
                    <span class="g">&lt;/</span><span class="t">h4</span><span class="g">&gt;</span>

                    <span class="g">&lt;</span><span class="t">div</span><span class="p"> </span><span class="a">class</span><span class="p">=</span><span class="s">"list-text0"</span><span class="p"> </span><span class="a">*ngIf</span><span class="p">=</span><span class="s">"latest-leads m-r"</span><span class="p"> </span><span class="a">(click)</span><span class="p">="</span><span class="f">openDetails</span><span class="p">(</span><span class="a">item.id</span><span class="p">)" </span><span class="a">s</span><span class="g">&gt;</span>
                        <span class="g">&lt;</span><span class="t">div</span><span class="p"> </span><span class="a">class</span><span class="p">=</span><span class="s">"p-l-10 lat"</span><span class="p"> </span><span class="a">*ngIf</span><span class="p">=</span><span class="s">"upcoming-events0"</span><span class="p"> </span><span class="a">(click)</span><span class="p">="</span><span class="f">openDetails</span><span class="p">(</span><span class="a">it</span><span class="g">&gt;</span>
                             <span class="g">&lt;</span><span class="t">p</span><span class="p"> </span><span class="a">class</span><span class="p">=</span><span class="s">"l"</span><span class="g">&gt;</span>
                                 <span class="g">&lt;</span><span class="t">h4</span><span class="p"> </span><span class="a">class</span><span class="p">=</span><span class="s">"title-latest-leads ion-text-"</span><span class="g">&gt;</span>
                                     <span class="g">&lt;</span><span class="t">div</span>
                                        <span class="a">class</span><span class="p">=</span><span class="s">"bg-color3 latest-leads-ion-justify-content-center pos-abs d-inline-block-m-b-10-m-t-10"</span><span class="g">&gt;</span>
                                        <span class="g">&lt;</span><span class="t">ion-icon</span><span class="p"> </span><span class="a">class</span><span class="p">=</span><span class="s">"m-"</span><span class="p"> </span><span class="a">name</span><span class="p">=</span><span class="s">"p-"</span><span class="g">&gt;&lt;/</span><span class="t">ion-icon</span><span class="g">&gt;</span>
                                     <span class="g">&lt;/</span><span class="t">div</span><span class="g">&gt;</span>
                                     <span class="g">&lt;</span><span class="t">div</span><span class="p"> </span><span class="a">class</span><span class="p">=</span><span class="s">"color30"</span><span class="g">&gt;</span>
                                        <span class="g">&lt;</span><span class="t">ion-col</span><span class="g">&gt;</span>
                                            <span class="g">&lt;</span><span class="t">div</span>
                                                <span class="a">class</span><span class="p">=</span><span class="s">"pos-abs p-t-10 list-text-m-b-10-pos-abs m-0 p-b-5 text-truncate-f"</span><span class="g">&gt;</span>
                                                <span class="p">{{</span><span class="a">consum</span><span class="p">.</span><span class="a">docket</span><span class="p">}}</span>
                                            <span class="g">&lt;/</span><span class="t">ion</span><span class="g">&gt;</span>
                                            <span class="g">&lt;</span><span class="t">h4</span><span class="p"> </span><span class="a">class</span><span class="p">=</span><span class="s">"fonto-12 text-truncate-fonto-12 ion-align-items-c"</span><span class="g">&gt;</span>
                                                <span class="p">{{</span><span class="a">consu</span><span class="p">.</span><span class="a">dock</span><span class="p">}}</span>
                                            <span class="g">&lt;/</span><span class="t">h4</span><span class="g">&gt;</span>
                                            <span class="g">&lt;</span><span class="t">div</span><span class="p"> </span><span class="a">class</span><span class="p">=</span><span class="s">"pos-rel m-0-p-t-10 text-truncate-latest-lead"</span><span class="g">&gt;</span>
                                                <span class="p">{{ </span><span class="s">'item-'</span><span class="p"> | </span><span class="f">languageChange</span><span class="p"> }}</span>
                                                <span class="p">{{ </span><span class="s">'p-r-10xion-justi'</span><span class="p"> | </span><span class="f">languageChange</span><span class="p"> }}</span>
                                             <span class="g">&lt;/</span><span class="t">io</span><span class="g">&gt;</span>
                                         <span class="g">&lt;/</span><span class="t">p</span><span class="g">&gt;</span>
                                     <span class="g">&lt;/</span><span class="t">io</span><span class="g">&gt;</span>
                                 <span class="g">&lt;/</span><span class="t">ion</span><span class="g">&gt;</span>
                             <span class="g">&lt;/</span><span class="t">p</span><span class="g">&gt;</span>
                             <span class="g">&lt;</span><span class="t">span</span><span class="p"> </span><span class="a">class</span><span class="p">=</span><span class="s">"m-b-10 ion-justify-conte"</span><span class="g">&gt;</span>
                                 <span class="g">&lt;</span><span class="t">ion-icon</span><span class="p"> </span><span class="a">class</span><span class="p">=</span><span class="s">"desc-info-p-t-10-p-r-10-p"</span><span class="p"> </span><span class="a">name</span><span class="p">=</span><span class="s">"font-14-pos-a"</span><span class="g">&gt;&lt;/</span><span class="t">ion-icon</span><span class="g">&gt;</span>
                             <span class="g">&lt;/</span><span class="t">div</span><span class="g">&gt;</span>
                          <span class="g">&lt;/</span><span class="t">p</span><span class="g">&gt;</span>
                     <span class="g">&lt;/</span><span class="t">sp</span><span class="g">&gt;</span>

                <span class="g">&lt;/</span><span class="t">p</span><span class="g">&gt;</span>

                <span class="g">&lt;</span><span class="t">div</span><span class="p"> </span><span class="a">class</span><span class="p">=</span><span class="s">"m-0 pos-rel fonto-12-dark-font p-l-10 p-t-10 m-t-10 title font-14 ion-justify-co"</span><span class="g">&gt;</span>
                    <span class="g">&lt;</span><span class="t">div</span><span class="p"> </span><span class="a">class</span><span class="p">=</span><span class="s">"border-rad"</span><span class="p"> </span><span class="a">*ngIf</span><span class="p">=</span><span class="s">"</span><span class="g">&gt;</span>
                    <span class="g">&lt;</span><span class="t">ion-col</span><span class="p"> </span><span class="a">class</span><span class="p">=</span><span class="s">"p-l-10 d-flex latest-leads c"</span><span class="g">&gt;</span>
                        <span class="g">&lt;</span><span class="t">span</span><span class="p"> </span><span class="a">class</span><span class="p">=</span><span class="s">"bg-color3-m-t-10 d-inli"</span><span class="g">&gt;</span>
                             <span class="p">{{ </span><span class="s">'fonto-12xm-r-1'</span><span class="p"> | </span><span class="f">languageChange</span><span class="p"> }}</span>
                          <span class="g">&lt;/</span><span class="t">ion-</span><span class="g">&gt;</span>
                          <span class="g">&lt;</span><span class="t">ion-col</span><span class="p"> </span><span class="a">class</span><span class="p">=</span><span class="s">"p-t-10 bg"</span><span class="g">&gt;</span>
                            <span class="p">{{</span><span class="a">consumer_in</span><span class="p">.</span><span class="a">docket_num</span><span class="p">}}</span>
                          <span class="g">&lt;/</span><span class="t">ion</span><span class="g">&gt;</span>
                     <span class="g">&lt;/</span><span class="t">h4</span><span class="g">&gt;</span>
                         <span class="g">&lt;</span><span class="t">div</span><span class="p"> </span><span class="a">class</span><span class="p">=</span><span class="s">"d-inline-b"</span><span class="p"> </span><span class="a">*ngIf</span><span class="p">=</span><span class="s">"d-flex border-ra"</span><span class="p"> </span><span class="a">(click)</span><span class="p">="</span><span class="f">openDetails</span><span class="p">(</span><span class="a">item.id</span><span class="p">)" </span><span class="a">style</span><span class="p">=</span><span class="s">"pos-abs</span><span class="g">&gt;</span>
                         <span class="g">&lt;</span><span class="t">h4</span><span class="p"> </span><span class="a">class</span><span class="p">=</span><span class="s">"d-inline-block"</span><span class="g">&gt;</span>
                                 <span class="g">&lt;</span><span class="t">p</span><span class="g">&gt;</span>
                                     <span class="g">&lt;</span><span class="t">h4</span><span class="p"> </span><span class="a">class</span><span class="p">=</span><span class="s">"item-list bg-color3 item"</span><span class="g">&gt;</span>
                                     <span class="g">&lt;</span><span class="t">div</span>
                                        <span class="a">class</span><span class="p">=</span><span class="s">"font-14 title-d-flex-ion-align-items-center-upcoming-events-bg-color3 pos-abs-color3"</span><span class="g">&gt;</span>
                                        <span class="g">&lt;</span><span class="t">ion-icon</span><span class="p"> </span><span class="a">class</span><span class="p">=</span><span class="s">"fo"</span><span class="p"> </span><span class="a">name</span><span class="p">=</span><span class="s">"po"</span><span class="g">&gt;&lt;/</span><span class="t">ion-icon</span><span class="g">&gt;</span>
                                     <span class="g">&lt;/</span><span class="t">di</span><span class="g">&gt;</span>
                                     <span class="g">&lt;</span><span class="t">ion-col</span><span class="p"> </span><span class="a">class</span><span class="p">=</span><span class="s">"lat"</span><span class="g">&gt;</span>
                                        <span class="g">&lt;</span><span class="t">ion-row</span><span class="g">&gt;</span>
                                            <span class="g">&lt;</span><span class="t">ion-row</span><span class="p"> </span><span class="a">class</span><span class="p">=</span><span class="s">"latest-leads p-r-10-d-inline-block m-b-10-de"</span><span class="g">&gt;</span>
                                                <span class="g">&lt;</span><span class="t">div</span><span class="p"> </span><span class="a">class</span><span class="p">=</span><span class="s">"text-trunc"</span><span class="p"> </span><span class="a">*ngIf</span><span class="p">=</span><span class="s">"item-list</span><span class="g">&gt;</span>
                                                    <span class="g">&lt;</span><span class="t">div</span><span class="p"> </span><span class="a">class</span><span class="p">=</span><span class="s">"text-trunc"</span><span class="p"> </span><span class="a">*ngIf</span><span class="p">=</span><span class="s">"p-b-5-m-b-10-p-b"</span><span class="p"> </span><span class="a">(click)</span><span class="p">="</span><span class="f">openDetails</span><span class="p">(</span><span class="a">item.id</span><span class="p">)" </span><span class="a">styl</span><span class="g">&gt;</span>
                                                <span class="g">&lt;</span><span class="t">div</span><span class="p"> </span><span class="a">class</span><span class="p">=</span><span class="s">"border-rad"</span><span class="p"> </span><span class="a">*ngIf</span><span class="p">=</span><span class="s">"p-b-5 ion-text-r"</span><span class="p"> </span><span class="a">(click)</span><span class="p">="</span><span class="f">openDetails</span><span class="p">(</span><span class="a">item.id</span><span class="p">)" </span><span class="a">style</span><span class="g">&gt;</span>
                                                <span class="g">&lt;</span><span class="t">div</span><span class="p"> </span><span class="a">class</span><span class="p">=</span><span class="s">"d-inline-b"</span><span class="p"> </span><span class="a">*ngIf</span><span class="p">=</span><span class="s">"desc-info</span><span class="g">&gt;</span>
                                                    <span class="g">&lt;</span><span class="t">div</span><span class="p"> </span><span class="a">class</span><span class="p">=</span><span class="s">"m-b-10 ion"</span><span class="p"> </span><span class="a">*ngIf</span><span class="p">=</span><span class="s">"text-truncate-up"</span><span class="p"> </span><span class="a">(click)</span><span class="p">="</span><span class="f">openDeta</span><span class="g">&gt;</span>
                                                <span class="g">&lt;/</span><span class="t">div</span><span class="g">&gt;</span>
                                                    <span class="g">&lt;</span><span class="t">div</span><span class="p"> </span><span class="a">class</span><span class="p">=</span><span class="s">"d-flex-ion"</span><span class="p"> </span><span class="a">*ngIf</span><span class="p">=</span><span class="s">"p-b-5 pos-abs p-"</span><span class="p"> </span><span class="a">(click)</span><span class="p">="</span><span class="f">openDetails</span><span class="p">(</span><span class="a">ite</span><span class="g">&gt;</span>
                                                <span class="g">&lt;</span><span class="t">div</span><span class="p"> </span><span class="a">class</span><span class="p">=</span><span class="s">"ion-text-r"</span><span class="p"> </span><span class="a">*ngIf</span><span class="p">=</span><span class="s">"lead-num-bg-colo"</span><span class="p"> </span><span class="a">(c</span><span class="g">&gt;</span>
                                                    <span class="p">{{</span><span class="a">consumer_inqu</span><span class="p">.</span><span class="a">docket_number</span><span class="p">}}</span>
                                            <span class="g">&lt;/</span><span class="t">div</span><span class="g">&gt;</span>
                                            <span class="g">&lt;</span><span class="t">span</span><span class="p"> </span><span class="a">class</span><span class="p">=</span><span class="s">"p-r-10-ion-justify-content-center item-list"</span><span class="g">&gt;</span>
                                                <span class="p">{{</span><span class="a">consumer_inq</span><span class="p">.</span><span class="a">docket_numbe</span><span class="p">}}</span>
                                             <span class="g">&lt;/</span><span class="t">span</span><span class="g">&gt;</span>
                                         <span class="g">&lt;/</span><span class="t">io</span><span class="g">&gt;</span>
                                     <span class="g">&lt;/</span><span class="t">p</span><span class="g">&gt;</span>
                                 <span class="g">&lt;/</span><span class="t">ion</span><span class="g">&gt;</span>
                              <span class="g">&lt;/</span><span class="t">di</span><span class="g">&gt;</span>
                         <span class="g">&lt;/</span><span class="t">di</span><span class="g">&gt;</span>
                             <span class="g">&lt;/</span><span class="t">ion</span><span class="g">&gt;</span>
                             <span class="g">&lt;</span><span class="t">h4</span><span class="p"> </span><span class="a">class</span><span class="p">=</span><span class="s">"col"</span><span class="g">&gt;</span>
                                     <span class="g">&lt;</span><span class="t">span</span><span class="p"> </span><span class="a">class</span><span class="p">=</span><span class="s">"item-list latest-leads-m-0-m-0 pos-abs color3-p-r-10-d-fle"</span><span class="g">&gt;</span>
                                     <span class="g">&lt;</span><span class="t">divxxxxx</span>
                                        <span class="g">&lt;</span><span class="t">div</span><span class="p"> </span><span class="a">class</span><span class="p">=</span><span class="s">"p-r-10 m-0"</span><span class="p"> </span><span class="a">*ngIf</span><span class="p">=</span><span class="s">"text-truncate io"</span><span class="p"> </span><span class="a">(click)</span><span class="p">="</span><span class="f">openDetails</span><span class="p">(</span><span class="a">item.id</span><span class="p">)" </span><span class="a">style</span><span class="p">=</span><span class="s">"p-r-</span><span class="g">&gt;</span>
                                        <span class="a">class</span><span class="p">=</span><span class="s">"m-b-10 d-inline-block latest-leads-po"</span><span class="g">&gt;</span>
                                        <span class="g">&lt;</span><span class="t">ion-icon</span><span class="p"> </span><span class="a">class</span><span class="p">=</span><span class="s">"ion-align-items-center m-r-10-text-trunc"</span><span class="p"> </span><span class="a">name</span><span class="p">=</span><span class="s">"font-14 m-r-10 m-0-it"</span><span class="g">&gt;&lt;/</span><span class="t">ion-icon</span><span class="g">&gt;</span>
                                        <span class="p">{{ </span><span class="s">'m-b-10'</span><span class="p"> | </span><span class="f">languageChange</span><span class="p"> }}</span>
                                     <span class="g">&lt;/</span><span class="t">h4</span><span class="g">&gt;</span>
                                     <span class="g">&lt;</span><span class="t">ion-icon</span><span class="p"> </span><span class="a">class</span><span class="p">=</span><span class="s">"te"</span><span class="p"> </span><span class="a">name</span><span class="p">=</span><span class="s">"m-"</span><span class="g">&gt;&lt;/</span><span class="t">ion-icon</span><span class="g">&gt;</span>
                                     <span class="g">&lt;</span><span class="t">divxxxxx</span>
                                        <span class="g">&lt;</span><span class="t">div</span><span class="p"> </span><span class="a">class</span><span class="p">=</span><span class="s">"pos-rel-d-"</span><span class="p"> </span><span class="a">*ngIf</span><span class="p">=</span><span class="s">"m-t-10 p-t-10 po"</span><span class="p"> </span><span class="a">(click)</span><span class="p">="</span><span class="f">openDetails</span><span class="p">(</span><span class="a">item.id</span><span class="g">&gt;</span>
                                        <span class="a">class</span><span class="p">=</span><span class="s">"text-truncate-lead-num p-r-10-ion-jus"</span><span class="g">&gt;</span>
                                        <span class="g">&lt;</span><span class="t">ion-col</span><span class="p"> </span><span class="a">class</span><span class="p">=</span><span class="s">"lead-num title p-l-10 item-li"</span><span class="g">&gt;</span>
                                            <span class="a">class</span><span class="p">=</span><span class="s">"ion-justify-content-center0"</span><span class="g">&gt;</span>
                                        <span class="g">&lt;/</span><span class="t">span</span><span class="g">&gt;</span>
                                        <span class="p">{{ </span><span class="s">'title-'</span><span class="p"> | </span><span class="f">languageChange</span><span class="p"> }}</span>
                                     <span class="g">&lt;/</span><span class="t">h4</span><span class="g">&gt;</span>
                                 <span class="g">&lt;/</span><span class="t">h4</span><span class="g">&gt;</span>
                              <span class="g">&lt;/</span><span class="t">div</span><span class="g">&gt;</span>
                          <span class="g">&lt;/</span><span class="t">ion-</span><span class="g">&gt;</span>
                     <span class="g">&lt;/</span><span class="t">span</span><span class="g">&gt;</span>
                <span class="g">&lt;/</span><span class="t">di</span><span class="g">&gt;</span>

                <span class="c">&lt;!-- ion-justify-content-center fonto-12-dark-</span>
                    <span class="c">&lt;!-- border-radius-50-m-r-10 ion-justify-content-center</span>
                        <span class="c">&lt;!-- m-b-10 m-r-10-pos-rel-item-list-p-</span>
                            <span class="c">&lt;!-- border-ra</span>
                                 <span class="c">&lt;!-- text-truncate bg-color3-m-r-10 list-</span>
                                     <span class="c">&lt;!--</span>
                                        <span class="c">&lt;!-- font-14 color3 pos-abs-upcoming-events m-0-tick-circle-fonto-12 upcoming-events bg-color3 fon</span>
                                        <span class="c">&lt;!-- p-r-10-bg-color3-title color3 p-b-5-text-truncate-p-b-5 color3-title-tick-circle m-r-10-de</span>
                                     <span class="c">&lt;!-- </span>
                                     <span class="c">&lt;!-- latest-leads border-radius-50 p-r-10-pos-abs tex</span>
                                        <span class="c">&lt;!-- border-radius-50-fonto-12-lead-num m-b-10 fonto-</span>
                                            <span class="c">&lt;!-- tick-circle-desc-info-d-flex te</span>
                                        <span class="c">&lt;!-- </span>
                                        <span class="c">&lt;!-- m-0 ion-text-right bg-</span>
                                            <span class="c">&lt;!-- m-b-10 list-text d-inline-block p-t-10 lea</span>
                                        <span class="c">&lt;!-- </span>
                                     <span class="c">&lt;!-- </span>
                                 <span class="c">&lt;!-- </span>
                             <span class="c">&lt;!-- bg</span>
                        <span class="c">&lt;!-- ion-</span>
                    <span class="c">&lt;!-- </span>
                    <span class="c">&lt;!-- item-list border-radius-50-latest-leads fonto-12 tick-circle m-</span>
                        <span class="c">&lt;!-- item-list desc-info text-truncate-</span>
                            <span class="c">&lt;!-- bg-color3</span>
                                 <span class="c">&lt;!-- d-flex upcoming-events-m-0-pos-rel d</span>
                                     <span class="c">&lt;!--</span>
                                        <span class="c">&lt;!-- upcoming-events d-flex-p-t-10 item-list d-flex m-r-10 border-radius-50-p-r-10-bg</span>
                                        <span class="c">&lt;!-- ion-justify-content-center-bg-color3-p-l-10 pos-rel fonto-12-list-text-color3 ion-text</span>
                                     <span class="c">&lt;!-- </span>
                                     <span class="c">&lt;!-- p-r-10 m-r-10 item-list bg-color3-bg-color3-tick</span>
                                        <span class="c">&lt;!-- m-t-10 m-r-10 font-14 m-r-10-ion-justify-content</span>
                                            <span class="c">&lt;!-- p-l-10 m-b-10-p-l-10 d-flex m-b-</span>
                                        <span class="c">&lt;!-- </span>
                                        <span class="c">&lt;!-- p-l-10 text-truncate-p</span>
                                            <span class="c">&lt;!-- pos-abs</span>
                                        <span class="c">&lt;!-- </span>

                                    <span class="c">&lt;/div&gt;</span>
                                <span class="c">&lt;/div&gt;</span>
                            <span class="c">&lt;/ion-col&gt;</span>
                        <span class="c">&lt;/ion-row&gt;</span>
                    <span class="c">&lt;/div&gt;</span>
                <span class="c">&lt;/div&gt; --&gt;</span>

                <span class="g">&lt;</span><span class="t">div</span> <span class="a">class</span>=<span class="s">"upcoming-events latest-leads bg-color3 m-t-10 m-b-10 p-l-10 p-r-10 p-t-10 p-b-5"</span><span class="g">&gt;</span>
                    <span class="g">&lt;</span><span class="t">div</span> <span class="a">class</span>=<span class="s">"title d-flex p-l-10 p-r-10 p-b-10"</span><span class="g">&gt;</span>
                        <span class="g">&lt;</span><span class="t">h4</span> <span class="a">class</span>=<span class="s">"font-14 color3 m-0 m-r-10"</span><span class="g">&gt;</span>
                            {{ <span class="s">'New Enquiry'</span> | <span class="f">languageChange</span> }}
                        <span class="g">&lt;/</span><span class="t">h4</span><span class="g">&gt;</span>
                        <span class="g">&lt;</span><span class="t">span</span> <span class="a">class</span>=<span class="s">"d-inline-block"</span><span class="g">&gt;</span>
                            {{<span class="a">consumerInquiry</span>.<span class="a">length</span>}}
                        <span class="g">&lt;/</span><span class="t">span</span><span class="g">&gt;</span>
                    <span class="g">&lt;/</span><span class="t">div</span><span class="g">&gt;</span>
                    <span class="g">&lt;</span><span class="t">div</span> <span class="a">class</span>=<span class="s">"item-list pos-rel"</span> <span class="a">*ngFor</span>="<span class="k">let</span> <span class="a">consumer_inq</span> <span class="k">of</span> <span class="a">consumerInquiry</span>; <span class="a">trackBy</span>: <span class="a">trackByInquiry</span>"<span class="g">&gt;</span>
                        <span class="g">&lt;</span><span class="t">div</span> <span class="a">class</span>=<span class="s">"lead-num fonto-12 pos-abs text-truncate"</span><span class="g">&gt;</span>
                            {{<span class="a">consumer_inq</span>.<span class="a">docket_no</span>}}
                        <span class="g">&lt;/</span><span class="t">div</span><span class="g">&gt;</span>
                        <span class="g">&lt;</span><span class="t">ion-row</span> <span class="a">class</span>=<span class="s">"ion-align-items-center"</span> <span class="a">(click)</span>="<span class="f">enquiryDetails</span>(<span class="a">consumer_inq</span>.<span class="a">id</span>)" <span class="g">&gt;</span>
                            <span class="g">&lt;</span><span class="t">ion-col</span> <span class="a">size</span>=<span class="s">"10"</span><span class="g">&gt;</span>
                                <span class="g">&lt;</span><span class="t">div</span> <span class="a">class</span>=<span class="s">"d-flex ion-align-items-start"</span><span class="g">&gt;</span>
                                    <span class="g">&lt;</span><span class="t">div</span>
                                        <span class="a">class</span>=<span class="s">"tick-circle border-radius-50 d-flex ion-align-items-center ion-justify-content-center m-r-10"</span><span class="g">&gt;</span>
                                        <span class="g">&lt;</span><span class="t">ion-icon</span> <span class="a">name</span>=<span class="s">"checkmark"</span><span class="g">&gt;</span><span class="g">&lt;/</span><span class="t">ion-icon</span><span class="g">&gt;</span>
                                    <span class="g">&lt;/</span><span class="t">div</span><span class="g">&gt;</span>
                                    <span class="g">&lt;</span><span class="t">div</span> <span class="a">class</span>=<span class="s">"desc-info"</span><span class="g">&gt;</span>
                                        <span class="g">&lt;</span><span class="t">ion-row</span><span class="g">&gt;</span>
                                            <span class="g">&lt;</span><span class="t">ion-col</span> <span class="a">size</span>=<span class="s">"9"</span><span class="g">&gt;</span>
                                                <span class="g">&lt;</span><span class="t">p</span> <span class="a">class</span>=<span class="s">"m-0"</span><span class="g">&gt;</span>
                                                    <span class="g">&lt;</span><span class="t">span</span>
                                                        <span class="a">class</span>=<span class="s">"list-text title-head fonto-bold dark-font p-14 color3 text-truncate"</span><span class="g">&gt;</span>
                                                        <span class="p">{{</span><span class="a">consumer_i</span><span class="p">.</span><span class="a">docket_nu</span><span class="p">}}</span>
                                                    <span class="g">&lt;/</span><span class="t">ion-</span><span class="g">&gt;</span>
                                                <span class="g">&lt;/</span><span class="t">i</span><span class="g">&gt;</span>
                                            <span class="g">&lt;/</span><span class="t">h4</span><span class="g">&gt;</span>
                                        <span class="g">&lt;</span><span class="t">ion-row</span><span class="g">&gt;</span>
                                         <span class="a">class</span><span class="p">=</span><span class="s">"font-"</span><span class="g">&gt;</span>
                                            <span class="g">&lt;</span><span class="t">p</span><span class="p"> </span><span class="a">class</span><span class="p">=</span><span class="s">"p-b-5-p-l-10-list-text text-truncate-pos-rel-font"</span><span class="g">&gt;</span>
                                                <span class="p">{{</span><span class="a">consumer_in</span><span class="p">.</span><span class="a">docket_numb</span><span class="p">}}</span>
                                            <span class="g">&lt;/</span><span class="t">d</span><span class="g">&gt;</span>
                                            <span class="g">&lt;</span><span class="t">div</span><span class="p"> </span><span class="a">class</span><span class="p">=</span><span class="s">"title ion-align-items-center-pos-abs upcom"</span><span class="g">&gt;</span>
                                                <span class="p">{{</span><span class="a">consumer_inqui</span><span class="p">.</span><span class="a">docket_number</span><span class="p">}}</span>
                                            <span class="g">&lt;/</span><span class="t">d</span><span class="g">&gt;</span>
                                        <span class="g">&lt;/</span><span class="t">h</span><span class="g">&gt;</span>
                                    <span class="g">&lt;/</span><span class="t">p</span><span class="g">&gt;</span>
                                <span class="g">&lt;/</span><span class="t">di</span><span class="g">&gt;</span>
                            <span class="g">&lt;/</span><span class="t">ion-ro</span><span class="g">&gt;</span>
                            <span class="g">&lt;</span><span class="t">div</span><span class="p"> </span><span class="a">class</span><span class="p">=</span><span class="s">"p-t-10-color3-upcoming-eve"</span><span class="g">&gt;</span>
                                <span class="g">&lt;</span><span class="t">ion-icon</span><span class="p"> </span><span class="a">class</span><span class="p">=</span><span class="s">"color3-ion-align-items-center pos-abs"</span><span class="p"> </span><span class="a">name</span><span class="p">=</span><span class="s">"d-flex fonto-12 ion"</span><span class="g">&gt;&lt;/</span><span class="t">ion-icon</span><span class="g">&gt;</span>
                            <span class="g">&lt;/</span><span class="t">div</span><span class="g">&gt;</span>
                        <span class="g">&lt;/</span><span class="t">div</span><span class="g">&gt;</span>
                    <span class="g">&lt;/</span><span class="t">div</span><span class="g">&gt;</span>

                    <span class="g">&lt;</span><span class="t">div</span><span class="p"> </span><span class="a">class</span><span class="p">=</span><span class="s">"m-0 ion-t"</span><span class="g">&gt;</span>
                        <span class="g">&lt;</span><span class="t">ion-col</span><span class="p"> </span><span class="a">class</span><span class="p">=</span><span class="s">"color3 p-r-10 pos-rel"</span><span class="g">&gt;</span>
                            <span class="g">&lt;</span><span class="t">ion-col</span><span class="p"> </span><span class="a">class</span><span class="p">=</span><span class="s">"p"</span><span class="g">&gt;</span>
                                <span class="g">&lt;</span><span class="t">div</span><span class="p"> </span><span class="a">class</span><span class="p">=</span><span class="s">"title p-t-10 pos-rel-item-list p-"</span><span class="g">&gt;</span>
                                    <span class="p">{{</span><span class="a">consumer_i</span><span class="p">.</span><span class="a">docket_nu</span><span class="p">}}</span>
                                    <span class="g">&lt;</span><span class="t">div</span><span class="p"> </span><span class="a">class</span><span class="p">=</span><span class="s">"ion-justif"</span><span class="p"> </span><span class="a">*ngIf</span><span class="p">=</span><span class="s">"p-r-10 d-inline-"</span><span class="p"> </span><span class="a">(clic</span><span class="g">&gt;</span>
                                    <span class="p">{{ </span><span class="s">'ion-text-right-i'</span><span class="p"> | </span><span class="f">languageChange</span><span class="p"> }}</span>
                                <span class="g">&lt;/</span><span class="t">d</span><span class="g">&gt;</span>
                            <span class="g">&lt;/</span><span class="t">ion-co</span><span class="g">&gt;</span>
                            <span class="g">&lt;</span><span class="t">span</span><span class="p"> </span><span class="a">class</span><span class="p">=</span><span class="s">"fo"</span><span class="g">&gt;</span>
                                <span class="g">&lt;</span><span class="t">div</span><span class="p"> </span><span class="a">class</span><span class="p">=</span><span class="s">"ion-text-r"</span><span class="p"> </span><span class="a">*ngIf</span><span class="p">=</span><span class="s">"item-list tick-c"</span><span class="p"> </span><span class="a">(click)</span><span class="p">="</span><span class="f">openDetails</span><span class="p">(</span><span class="a">item.id</span><span class="p">)" </span><span class="a">style</span><span class="p">=</span><span class="s">"dark-font po</span><span class="g">&gt;</span>
                                    <span class="g">&lt;</span><span class="t">p</span><span class="p"> </span><span class="a">class</span><span class="p">=</span><span class="s">"p"</span><span class="g">&gt;</span>
                                    <span class="p">{{ </span><span class="s">'color3-tick'</span><span class="p"> | </span><span class="f">languageChange</span><span class="p"> }}</span>
                                <span class="g">&lt;/</span><span class="t">span</span><span class="g">&gt;</span>
                            <span class="g">&lt;/</span><span class="t">div</span><span class="g">&gt;</span>
                        <span class="g">&lt;/</span><span class="t">ion-ro</span><span class="g">&gt;</span>
                    <span class="g">&lt;/</span><span class="t">div</span><span class="g">&gt;</span>
                <span class="g">&lt;/</span><span class="t">div</span><span class="g">&gt;</span>


            <span class="g">&lt;/</span><span class="t">ion</span><span class="g">&gt;</span>
            <span class="c">&lt;!-- upcoming-events-f</span>
        <span class="g">&lt;/</span><span class="t">ion</span><span class="g">&gt;</span>

    <span class="g">&lt;/</span><span class="t">ion-row</span><span class="g">&gt;</span></div>
</div>
<div id="vscroll">
<div class="vs-slider"></div>
<div class="vs-git"></div>
<div class="vs-cursor"></div>
<div class="vs-info" style="top:14px;height:6px"></div><div class="vs-info" style="top:125px;height:6px"></div><div class="vs-info" style="top:131px;height:6px"></div><div class="vs-info" style="top:142px;height:6px"></div><div class="vs-info" style="top:248px;height:6px"></div><div class="vs-info" style="top:255px;height:7px"></div><div class="vs-info" style="top:317px;height:6px"></div><div class="vs-info" style="top:356px;height:6px"></div><div class="vs-info" style="top:366px;height:5px"></div><div class="vs-info" style="top:371px;height:5px"></div><div class="vs-info" style="top:468px;height:6px"></div></div>
<div id="find" class="abs" style="left:751px;top:0;width:419px;height:33px">
<div class="abs" style="left:0;top:0;width:3px;height:33px;background:#505050"></div>
<svg class="abs" style="left:3.2px;top:8.3px" width="17.5" height="17.5" viewBox="0 0 16 16" ><path fill="#c5c5c5" d="M10.072 8.024L5.715 3.667l.618-.62L11 7.716v.618L6.333 13l-.618-.619 4.357-4.357z"/></svg>
<div class="abs" style="left:21px;top:4px;width:231px;height:25px;background:#3c3c3c;border:1px solid #007fd4"></div>
<span class="tx" style="left:26.50px;top:4px;font-size:13.5px;letter-spacing:0.09px;color:#cccccc;line-height:25px;">at</span>
<div class="abs" style="left:41px;top:9.5px;width:1px;height:14px;background:#c8c8c8"></div>
<span class="tx" style="left:190.00px;top:4px;font-size:13px;letter-spacing:-1.804px;color:#a6a6a6;line-height:25px;">Aa</span>
<span class="tx" style="left:212.00px;top:4.5px;font-size:10.5px;letter-spacing:-2.229px;color:#a6a6a6;line-height:25px;">Ab</span>
<div class="abs" style="left:222.5px;top:12.5px;width:1px;height:8px;background:#a6a6a6"></div>
<div class="abs" style="left:211px;top:10.800000000000011px;width:14px;height:1px;background:#a6a6a6"></div>
<div class="abs" style="left:211px;top:22px;width:14px;height:1px;background:#a6a6a6"></div>
<div class="abs" style="left:234.20000000000005px;top:19px;width:4px;height:4px;background:#b4b4b4"></div>
<svg class="abs" style="left:238.5px;top:11.5px" width="8" height="8" viewBox="0 0 8 8" ><path d="M4 .300v7.400M.800 2.100l6.400 3.800M7.200 2.100L.800 5.900" stroke="#c5c5c5" stroke-width="1.050" fill="none"/></svg>
<span class="tx" style="left:257.40px;top:5px;font-size:13.3px;letter-spacing:-0.501px;color:#f48771;line-height:26px;">No results</span>
<svg class="abs" style="left:331px;top:10px" width="14" height="14" viewBox="0 0 14 14" ><path d="M7 13V1.500M1.800 6.500L7 1.300l5.200 5.200" fill="none" stroke="#5f5f5f" stroke-width="1.100"/></svg>
<svg class="abs" style="left:353.5px;top:10px" width="14" height="14" viewBox="0 0 14 14" ><path d="M7 1v11.500M1.800 7.500L7 12.700l5.200-5.200" fill="none" stroke="#5f5f5f" stroke-width="1.100"/></svg>
<svg class="abs" style="left:374.5px;top:10.5px" width="15" height="12" viewBox="0 0 15 12" ><path d="M0 1.500h14.500M0 6h14.500M0 10.500h9.500" fill="none" stroke="#c5c5c5" stroke-width="1.100"/></svg>
<svg class="abs" style="left:399.5px;top:11.5px" width="11" height="11" viewBox="0 0 11 11" ><path d="M.800 .800l9.400 9.400M10.200 .800L.800 10.200" fill="none" stroke="#c5c5c5" stroke-width="1.200"/></svg>
</div>
<div id="hscroll"></div>
</div>
<div id="status" class="abs">
<svg class="abs" style="left:13.5px;top:3px" width="14" height="16" viewBox="0 0 14 16" ><g fill="none" stroke="#fff" stroke-width="1.100"><circle cx="4" cy="3.500" r="1.700"/><circle cx="4" cy="12.500" r="1.700"/><circle cx="10.300" cy="5.500" r="1.700"/><path d="M4 5.200v5.600M10.300 7.200c0 2.500-6.300 1.500-6.300 3.600"/></g></svg>
<span class="tx" style="left:32.20px;top:0px;font-size:12.8px;letter-spacing:-0.076px;line-height:22px;">master*</span>
<svg class="abs" style="left:91.8px;top:4px" width="14" height="14" viewBox="0 0 16 16" ><path fill="#fff" d="M2.006 8.267L.78 9.5 0 8.73l2.090-2.070.760.010 2.090 2.120-.760.760-1.167-1.180a5 5 0 0 0 9.400 1.983l.813.597a6 6 0 0 1-11.220-2.683zm10.990-.466L11.760 6.550l-.760.760 2.090 2.110.760.010 2.090-2.070-.750-.760-1.194 1.180a6 6 0 0 0-11.110-2.920l.810.594a5 5 0 0 1 9.300 2.346z"/></svg>
<span class="tx" style="left:109.00px;top:0px;font-size:12.8px;letter-spacing:-0.754px;line-height:22px;">0↓ 1↑</span>
<svg class="abs" style="left:153px;top:4.5px" width="13" height="13" viewBox="0 0 13 13" ><g fill="none" stroke="#fff" stroke-width="1.050"><circle cx="6.500" cy="6.500" r="5.600"/><path d="M4.300 4.300l4.400 4.400M8.700 4.300l-4.400 4.400"/></g></svg>
<span class="tx" style="left:169.50px;top:0px;font-size:12.8px;letter-spacing:-0.225px;line-height:22px;">0</span>
<svg class="abs" style="left:179.5px;top:4.5px" width="13" height="13" viewBox="0 0 13 13" ><g fill="none" stroke="#fff" stroke-width="1.050"><path d="M6.500 1.200L12.200 11.800H.800z"/><path d="M6.500 4.800v3.700M6.500 9.300v1.200"/></g></svg>
<span class="tx" style="left:196.20px;top:0px;font-size:12.8px;letter-spacing:-0.725px;line-height:22px;">0</span>
<svg class="abs" style="left:206.2px;top:4.5px" width="13" height="13" viewBox="0 0 13 13" ><g fill="none" stroke="#fff" stroke-width="1.050"><circle cx="6.500" cy="6.500" r="5.600"/><path d="M6.500 5.600v3.800M6.500 3.500v1.200"/></g></svg>
<span class="tx" style="left:222.50px;top:0px;font-size:12.8px;letter-spacing:-0.744px;line-height:22px;">123</span>
<svg class="abs" style="left:259px;top:5px" width="13" height="13" viewBox="0 0 13 13" ><path d="M1 7l3.500 3.800L11.500 2" fill="none" stroke="#fff" stroke-width="1.200"/></svg>
<span class="tx" style="left:275.30px;top:0px;font-size:12.8px;letter-spacing:-0.066px;line-height:22px;">html |</span>
<svg class="abs" style="left:310px;top:5px" width="13" height="13" viewBox="0 0 13 13" ><path d="M1 7l3.500 3.800L11.500 2" fill="none" stroke="#fff" stroke-width="1.200"/></svg>
<span class="tx" style="left:326.50px;top:0px;font-size:12.8px;letter-spacing:-0.262px;line-height:22px;">lawyer-dashboard.page.html</span>
<svg class="abs" style="left:787px;top:4px" width="9" height="14" viewBox="0 0 9 14" ><g fill="none" stroke="#fff" stroke-width="1.100"><circle cx="4.500" cy="7" r="2.500"/><path d="M4.500 .500v4M4.500 9.500v4"/></g></svg>
<span class="tx" style="left:800.60px;top:0px;font-size:12.8px;letter-spacing:-0.377px;line-height:22px;">S-iddhartha, 9 months ago</span>
<span class="tx" style="left:959.30px;top:0px;font-size:12.8px;letter-spacing:-0.471px;line-height:22px;">Ln 322, Col 71 (2 selected)</span>
<span class="tx" style="left:1116.80px;top:0px;font-size:12.8px;letter-spacing:-0.897px;line-height:22px;">Spaces: 4</span>
<span class="tx" style="left:1183.30px;top:0px;font-size:12.8px;letter-spacing:-1.215px;line-height:22px;">UTF-8</span>
<span class="tx" style="left:1231.30px;top:0px;font-size:12.8px;letter-spacing:-2.492px;line-height:22px;">LF</span>
<span class="tx" style="left:1259.20px;top:0px;font-size:12.8px;letter-spacing:-1.013px;line-height:22px;">HTML</span>
<svg class="abs" style="left:1308px;top:4px" width="14" height="14" viewBox="0 0 14 14" ><g fill="none" stroke="#fff" stroke-width="1.050"><path d="M4 1.500h8.500v6h-2v2l-2-2"/><circle cx="4.300" cy="6.800" r="1.800"/><path d="M1 13c0-2.500 1.300-3.700 3.300-3.700S7.600 10.500 7.600 13"/></g></svg>
<svg class="abs" style="left:1338.5px;top:4px" width="14" height="14" viewBox="0 0 14 14" ><g fill="none" stroke="#fff" stroke-width="1.100"><path d="M2 10.500h10l-1.300-2V6c0-2.500-1.600-4.300-3.700-4.300S3.300 3.500 3.300 6v2.500z"/><path d="M5.500 10.800c0 1 .600 1.700 1.500 1.700s1.500-.700 1.500-1.700"/></g></svg>
</div>
</body>
</html>
